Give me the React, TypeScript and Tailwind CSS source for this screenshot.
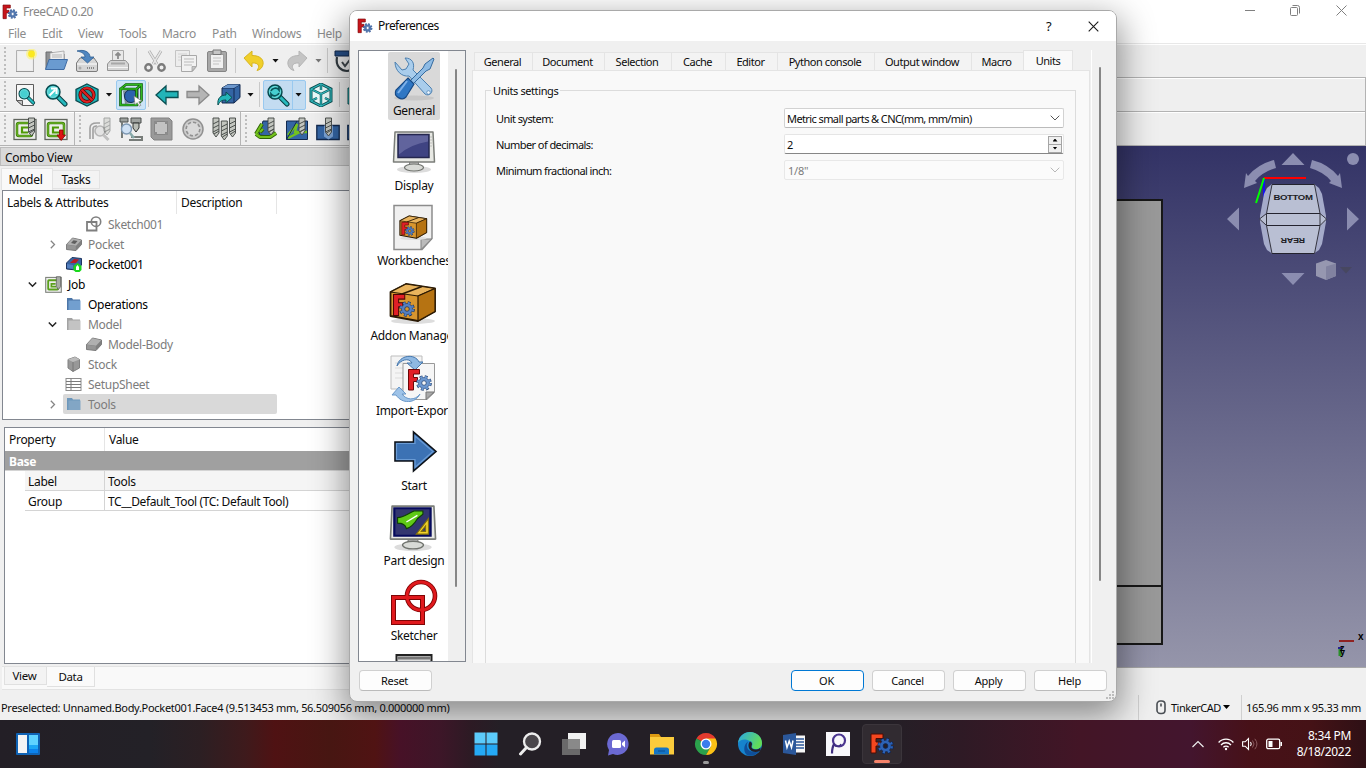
import React from "react";

type Kids = { children?: React.ReactNode };

/* ---------- shared drawing helpers ---------- */

function Svg({ s = 24, vb = 24, children }: { s?: number; vb?: number } & Kids) {
  return (
    <svg width={s} height={s} viewBox={`0 0 ${vb} ${vb}`} fill="none" className="block shrink-0">
      {children}
    </svg>
  );
}

function Gear({ x, y, r, fill = "#4a74b4", hole = "#fff", stroke = "#1c3766" }: { x: number; y: number; r: number; fill?: string; hole?: string; stroke?: string }) {
  const step = (2 * Math.PI * r) / 8;
  return (
    <g>
      <circle cx={x} cy={y} r={r} stroke={stroke} strokeWidth={r * 0.6} strokeDasharray={`${step * 0.55} ${step * 0.45}`} />
      <circle cx={x} cy={y} r={r * 0.92} fill={fill} stroke={stroke} strokeWidth={r * 0.1} />
      <circle cx={x} cy={y} r={r} stroke={fill} strokeWidth={r * 0.38} strokeDasharray={`${step * 0.45} ${step * 0.55}`} strokeDashoffset={-step * 0.05} />
      <circle cx={x} cy={y} r={r * 0.38} fill={hole} stroke={stroke} strokeWidth={r * 0.12} />
    </g>
  );
}

function FShape({ fill = "#c8151b", stroke = "#7d0b0e" }: { fill?: string; stroke?: string }) {
  return <path d="M1.5 1.5h11v4.5h-6v3.5h4v4h-4v8.5h-5z" fill={fill} stroke={stroke} strokeWidth="1" />;
}

function FreeCad({ s }: { s: number }) {
  return (
    <Svg s={s}>
      <FShape />
      <Gear x={16} y={15} r={5.5} fill="#5479b0" hole="#fff" stroke="#3a5c96" />
    </Svg>
  );
}

const Lens = ({ inner }: { inner?: React.ReactNode }) => (
  <g>
    <path d="M14 14l7 7" stroke="#063a3e" strokeWidth="5" strokeLinecap="round" />
    <path d="M14 14l7 7" stroke="#27b9bd" strokeWidth="3" strokeLinecap="round" />
    <circle cx="9" cy="9" r="7" fill="#1fb5b9" stroke="#07474b" strokeWidth="1.4" />
    <circle cx="9" cy="9" r="5.4" fill="#46cfd0" stroke="#8fe6e6" strokeWidth=".8" />
    {inner}
  </g>
);

const Drill = ({ x, y, h = 19 }: { x: number; y: number; h?: number }) => (
  <g transform={`translate(${x} ${y})`}>
    <path d={`M0 0h6v${h - 4}l-3 4l-3-4z`} fill="#c3c6c0" stroke="#3f4442" strokeWidth=".9" />
    <path d={`M0 6l6-3M0 10l6-3M0 14l6-3M1 ${h - 3}l5-3`} stroke="#4a4f4c" strokeWidth="1" />
  </g>
);

/* ---------- toolbar icons ---------- */

const I = {
  fresh: <Svg><path d="M3.5 1.5h17v21h-17z" fill="#ececec" stroke="#b0b0b0" /><path d="M5 3h14v18H5z" fill="#f1f1f1" /><path d="M3 22.500h18" stroke="#999" /><circle cx="18.5" cy="5" r="5.500" fill="#fff36b" opacity=".6" /><circle cx="18.5" cy="5" r="3.400" fill="#fbe81f" /></Svg>,
  open: <Svg><path d="M2 20V3h6l1 2h11v5" fill="#8f9193" stroke="#6a6c6e" /><path d="M6 11V4l14-2v9z" fill="#eee" stroke="#999" strokeWidth=".7" /><path d="M8 6h10M8 8h10" stroke="#b5b5b5" /><path d="M1.500 20.500l3.500-10h18.500l-3.500 10z" fill="#6a9bd0" stroke="#3e6ba4" /></Svg>,
  save: <Svg><path d="M1.500 14l3.500-5h14l3.500 5v7a1.500 1.500 0 0 1-1.500 1.500H3a1.500 1.500 0 0 1-1.500-1.500z" fill="#d6d6d6" stroke="#7c7c7c" /><path d="M2 15h20" stroke="#fff" /><path d="M12 19h8" stroke="#888" strokeWidth="2" strokeDasharray="1 1" /><circle cx="5" cy="19" r="1.500" fill="#aaa" /><path d="M2 2c7-2 13 1 13 6h4l-6.500 6L6 8h4c0-3-3-5-8-6z" fill="#4f86c0" stroke="#305f93" strokeWidth=".8" /></Svg>,
  print: <Svg><path d="M6.500 1.500h11v11h-11z" fill="#e9e9e9" stroke="#aaa" /><path d="M12 4v6M9.500 6.500L12 4l2.500 2.500" stroke="#8b8b8b" strokeWidth="1.800" /><path d="M1.500 15l3-3.500h15l3 3.500v6.500h-21z" fill="#d6d6d6" stroke="#939393" /><path d="M5 13.500h14v2H5z" fill="#888" opacity=".6" /><path d="M2 18.500h20" stroke="#f5f5f5" /></Svg>,
  cut: <Svg><path d="M6 2l8 13M18 2l-8 13" stroke="#a5a5a5" strokeWidth="2.800" /><path d="M6 2l8 13M18 2l-8 13" stroke="#e6e6e6" strokeWidth="1.500" /><circle cx="5.500" cy="18.500" r="3.200" stroke="#7b7b7b" strokeWidth="2.400" /><circle cx="18.500" cy="18.500" r="3.200" stroke="#7b7b7b" strokeWidth="2.400" /></Svg>,
  copy: <Svg><path d="M1.500 1.500h14v16h-14z" fill="#ededed" stroke="#c4c4c4" /><path d="M4 5h9M4 8h9M4 11h9" stroke="#d2d2d2" /><path d="M7.500 6.500h15v11l-4 5h-11z" fill="#f2f2f2" stroke="#a8a8a8" /><path d="M10 10h10M10 13h10M10 16h8" stroke="#bbb" /><path d="M22 17.500h-4v4.500z" fill="#c9c9c9" stroke="#999" strokeWidth=".7" /></Svg>,
  paste: <Svg><rect x="2.500" y="2.500" width="19" height="20" rx="1.500" fill="#a8a8a8" stroke="#858585" /><path d="M5.500 5.500h13v14h-13z" fill="#f0f0f0" stroke="#888" strokeWidth=".7" /><path d="M8 1h8v4.500H8z" fill="#c6c6c6" stroke="#777" /><path d="M8 9h8M8 12h8M8 15h6" stroke="#c2c2c2" /></Svg>,
  undo: <Svg><path d="M2 9l8-7v4.500c8 0 12 4 11 9-.5 3-3 5.500-6 6 3-4 2-8-5-7.500V18z" fill="#f0cf2a" stroke="#d8b520" /></Svg>,
  redo: <Svg><path d="M22 9l-8-7v4.500c-8 0-12 4-11 9 .5 3 3 5.500 6 6-3-4-2-8 5-7.500V18z" fill="#c4c4c4" stroke="#b5b5b5" /></Svg>,
  check: <Svg><path d="M3 8c-2 10 5 14 10 14s9-5 8-12" stroke="#333c42" strokeWidth="2.200" /><path d="M1 2h14v5H1z" fill="#27508a" stroke="#13294b" /><path d="M8 13l3 4 7-9" stroke="#40484d" strokeWidth="2" /></Svg>,
  fit: <Svg><path d="M3.500 1.500h17v21h-11l-6-5z" fill="#f6f6f6" stroke="#5b5b5b" /><path d="M3.500 17.500h6v5z" fill="#c4c4c4" stroke="#5b5b5b" /><g transform="translate(4.500 4) scale(.75)"><Lens /></g></Svg>,
  fitSel: <Svg><Lens inner={<path d="M5.500 12.500L11 7M7 5.500h5.500V11" stroke="#fff" strokeWidth="2" />} /></Svg>,
  style: <Svg><path d="M12 1l11 5.500v11L12 23 1 17.500v-11z" fill="#1eb4b8" stroke="#0a4a4e" strokeWidth="1.300" /><circle cx="12" cy="12" r="6.800" fill="#2b8f93" stroke="#4a0505" strokeWidth="3.600" /><circle cx="12" cy="12" r="6.800" stroke="#e02020" strokeWidth="2.200" /><path d="M7.200 7.200l9.600 9.600" stroke="#4a0505" strokeWidth="3.400" /><path d="M7 7l10 10" stroke="#e02020" strokeWidth="2.200" /></Svg>,
  bbox: <Svg><path d="M4 8l16-3v13L6 21z" fill="#7f8f9a" /><circle cx="12" cy="13" r="6.500" fill="#2b62ae" stroke="#122c55" /><path d="M1.500 6h16v16h-16zM1.500 6L7 1.500h15.500v16L17.500 22M17.500 6l5-4.500" stroke="#0a4f08" strokeWidth="2.600" /><path d="M1.500 6h16v16h-16zM1.500 6L7 1.500h15.500v16L17.500 22M17.500 6l5-4.500" stroke="#30b91f" strokeWidth="1.300" /><path d="M15 13l8 5-3.200.8 2 3.600-1.600.8-2-3.500-2.200 2z" fill="#fff" stroke="#777" strokeWidth=".7" /></Svg>,
  left: <Svg><path d="M1 12L11 3v5.500h12v6H11V21z" fill="#22b4b8" stroke="#0a4f52" strokeWidth="1.300" /></Svg>,
  right: <Svg><path d="M23 12L13 3v5.500H1v6h12V21z" fill="#b5b5b5" stroke="#8a8a8a" strokeWidth="1.300" /></Svg>,
  link: <Svg><path d="M5 5l6-3.500h12v13L17 20H5z" fill="#3465a4" stroke="#12294e" /><path d="M5 5h12v15M17 5l6-3.500" stroke="#12294e" /><path d="M5 5l6-3.500h12L17 5z" fill="#6d98cd" /><path d="M1 22c-1-7 3-10 8-10V9l6 5.500L9 20v-3c-4 0-6 1-8 5z" fill="#23b5b9" stroke="#0b4d50" /></Svg>,
  sync: <Svg><Lens inner={<path d="M5 8c1-3 6-4 8-1V4M13 10c-1 3-6 4-8 1v3" stroke="#0a5559" strokeWidth="1.700" />} /></Svg>,
  iso: <Svg><path d="M12 1l10 5v12l-10 5-10-5V6z" fill="#e9fbfb" stroke="#0a4f52" strokeWidth="3" /><path d="M2 6l10 5 10-5M12 11v12M12 2v5M3 17.500l5-2.500M21 17.500L16 15" stroke="#0a4f52" strokeWidth="2.400" /><path d="M12 1l10 5v12l-10 5-10-5V6zM2 6l10 5 10-5M12 11v12M12 2v5M3 17.500l5-2.500M21 17.500L16 15" stroke="#33bfc3" strokeWidth="1.200" /></Svg>,
  front: <Svg><path d="M2 5h14v16H2z" fill="#2ab8bc" stroke="#0a4f52" /></Svg>,
  job: <Svg><rect x="1" y="2.500" width="22" height="20" fill="#eceeea" stroke="#60655e" strokeWidth="1.300" /><rect x="4" y="6" width="15" height="13" rx="2" stroke="#3c7d0a" strokeWidth="2.500" /><rect x="4" y="6" width="15" height="13" rx="2" stroke="#78c52c" strokeWidth="1" /><path d="M15 15.500H9v-5h6" stroke="#4e9a06" strokeWidth="2.200" /><Drill x={15.500} y={1} h={18} /></Svg>,
  post: <Svg><rect x="1" y="2.500" width="22" height="20" fill="#eceeea" stroke="#60655e" strokeWidth="1.300" /><rect x="4" y="6" width="16" height="13" rx="2" stroke="#3c7d0a" strokeWidth="2.500" /><rect x="4" y="6" width="16" height="13" rx="2" stroke="#78c52c" strokeWidth="1" /><path d="M16 15.500H9v-5h6" stroke="#4e9a06" strokeWidth="2.200" /><path d="M15.500 13h3.500v5h2.500l-4.300 5.500-4.200-5.500h2.500z" fill="#dd1414" stroke="#8b0000" strokeWidth=".8" /></Svg>,
  inspect: <Svg><path d="M2 22V11c0-4 3-5 7-5h3M5 22V12c0-3 2-3 4-3" stroke="#a0a0a0" strokeWidth="1.600" /><circle cx="12" cy="14" r="5" fill="#e3e3e3" stroke="#b5b5b5" strokeWidth="1.600" /><path d="M15.500 18l5 5" stroke="#c0c0c0" strokeWidth="3" /><g opacity=".45"><Drill x={16} y={1} h={17} /></g></Svg>,
  simulate: <Svg><path d="M1 1h8v4H1zM12 1h10v5H12z" fill="#9ea29f" stroke="#4b4f4d" /><path d="M14 6h6v5l-3 4-3-4z" fill="#b9bdb6" stroke="#303432" /><path d="M3 5v16M12 20h11v3H10" stroke="#777c79" strokeWidth="2" /><circle cx="7.500" cy="12" r="5" fill="#cfe1f4" stroke="#7d98b3" strokeWidth="1.400" /><path d="M11 16l4 5" stroke="#8aa" strokeWidth="2.500" /></Svg>,
  select: <Svg><path d="M1 1h18l3 3v19H4l-3-3z" fill="#9a9a9a" stroke="#818181" /><rect x="4.500" y="4.500" width="13" height="13" fill="#c2c2c2" stroke="#858585" /><path d="M4 4h3v3H4zM15 4h3v3h-3zM4 15h3v3H4zM15 15h3v3h-3z" fill="#8b8b8b" /></Svg>,
  disk: <Svg><circle cx="12" cy="12" r="10" fill="#cdcdcd" stroke="#919191" strokeWidth="1.500" /><circle cx="12" cy="12" r="6.800" fill="#d9d9d9" stroke="#919191" strokeWidth="1.600" strokeDasharray="3.300 2" /></Svg>,
  bits: <Svg><g transform="translate(0 0)"><Drill x={1} y={1} h={19} /><Drill x={9.300} y={4} h={19} /><Drill x={17.500} y={1} h={19} /></g></Svg>,
  contour: <Svg><path d="M5 18L9 4h10v11l-4 4z" fill="#3465a4" stroke="#12294e" /><path d="M2 17l6-10M2 17l4 3h10l6-4M6 15l3-3" stroke="#2e6203" strokeWidth="4" strokeLinejoin="round" /><path d="M2 17l6-10M2 17l4 3h10l6-4M6 15l3-3" stroke="#73c21d" strokeWidth="2.200" strokeLinejoin="round" /><Drill x={14} y={1} h={17} /></Svg>,
  pocket: <Svg><path d="M1.500 4h21v18.500h-21z" fill="#3465a4" stroke="#12294e" /><path d="M3 18L12 7l-2 8h12M3 21l12-6" stroke="#73c21d" strokeWidth="2.400" /><path d="M1.500 22.500L12 4" stroke="#12294e" /><Drill x={14} y={1} h={17} /></Svg>,
  drilling: <Svg><path d="M.8 8.500h22.400v14H.8z" fill="#3465a4" stroke="#12294e" strokeWidth="1.300" /><path d="M8 8.500h9v11l-4.500 3-4.500-3z" fill="#7ba2d3" /><Drill x={9.500} y={1} h={18} /></Svg>,
};

/* ---------- toolbar pieces ---------- */

const Btn = ({ children }: Kids) => <div className="flex h-[30px] w-[31px] shrink-0 items-center justify-center">{children}</div>;
const Sep = () => <div className="flex h-[25px] w-[6px] shrink-0 justify-center"><div className="w-px bg-[#c9c9c9]" /></div>;
const Drop = ({ c = "bg-[#111]", w = "w-[12px]" }: { c?: string; w?: string }) => (
  <div className={`flex shrink-0 justify-center ${w}`}>
    <div className={`h-[4px] w-[7px] ${c} [clip-path:polygon(0_0,100%_0,50%_100%)]`} />
  </div>
);
const Handle = () => (
  <div className="flex h-[27px] w-[9.5px] shrink-0 flex-col items-start justify-between pl-[4px]">
    {Array.from({ length: 7 }, (_, i) => <i key={i} className="block h-[2px] w-[2px] bg-[#bdbdbd]" />)}
  </div>
);
const Edge = () => <div className="h-[33px] w-px shrink-0 bg-[#b5b5b5]" />;
const Bar = ({ children, right = true }: Kids & { right?: boolean }) => (
  <div className={`flex h-[34px] items-center overflow-hidden border-b border-b-[#b3b3b3] bg-[#efefef] shadow-[inset_0_1px_0_#fff] ${right ? "border-r border-r-[#b3b3b3]" : ""}`}>{children}</div>
);

/* ---------- tree ---------- */

const Folder = ({ c, d }: { c: string; d: string }) => (
  <Svg s={16} vb={16}><path d="M1 14V2h5l1 1.500h7V14z" fill={d} /><path d="M2.500 4.500h12V14h-12z" fill={c} /></Svg>
);
const Slab = ({ hole }: { hole?: boolean }) => (
  <Svg s={16} vb={16}>
    <path d="M.5 8.500L6.500 2l9 2v4.500L10 14.500l-9.500-1z" fill="#808080" stroke="#7a7a7a" strokeLinejoin="round" />
    <path d="M.8 8.500L6.500 2.300l8.700 1.900L10 9.800z" fill="#b0b0b0" />
    <path d="M.8 8.800l9 1.200v4l-9-1z" fill="#959595" />
    {hole && <path d="M5 7l2.500-2.800 4 .8L9 8z" fill="#5e5e5e" />}
  </Svg>
);
const treeIcons: Record<string, React.ReactNode> = {
  sketch: <Svg s={16} vb={16}><path d="M1 6h9.500v8.500H1z" stroke="#7f7f7f" strokeWidth="1.800" /><circle cx="10" cy="5.700" r="4.700" stroke="#7f7f7f" strokeWidth="1.600" /></Svg>,
  pocket: <Slab hole />,
  pocketNew: <Svg s={16} vb={16}><path d="M.5 7L6 1.500l9.500 1V9l-5 5-10-1z" fill="#3a64a0" stroke="#1c3460" /><path d="M4 7l4-4 5 .5L10 7z" fill="#b51c24" /><path d="M1 8l6 1v4L1 12z" fill="#527fbf" /><path d="M11.500 7l4 3v4l-2 2h-4l-2-2v-4z" fill="#19d81b" /><path d="M11.500 9l1.500 2v3h-3v-3z" fill="#fff" /></Svg>,
  job: <Svg s={17} vb={24}><rect x="1" y="2" width="22" height="21" fill="#efefef" stroke="#7c807a" strokeWidth="1.500" /><rect x="4.500" y="6" width="14" height="13" rx="1" stroke="#5ba01d" strokeWidth="2.600" /><path d="M16 15H9v-4h6" stroke="#5ba01d" strokeWidth="2.400" /><path d="M16 1h6v14l-3 4-3-4z" fill="#a8aca5" stroke="#555" /></Svg>,
  ops: <Folder c="#729fcf" d="#4c76a8" />,
  model: <Folder c="#c3c3c3" d="#a3a3a3" />,
  body: <Slab />,
  stock: <Svg s={16} vb={16}><path d="M2 3.500L9 1l4.500 2.500V12L7 15.500 2 12z" fill="#989898" stroke="#808080" /><path d="M2 3.500L7 6l6.500-2.500L9 1z" fill="#bbb" /><path d="M7 6v9.500" stroke="#777" /></Svg>,
  sheet: <Svg s={17} vb={17}><rect x="1" y="2.500" width="15" height="12" fill="#fff" stroke="#8c8c8c" /><path d="M1 5.500h15M1 8.500h15M1 11.500h15M6 2.500v12" stroke="#7b7b7b" /></Svg>,
  tools: <Folder c="#82a6c5" d="#6d97bb" />,
};

const Chevron = ({ open }: { open?: boolean }) => (
  <Svg s={9} vb={9}>{open ? <path d="M.8 2.500L4.500 6.200l3.700-3.700" stroke="#222" strokeWidth="1.500" /> : <path d="M2.800.800L6.500 4.500 2.800 8.200" stroke="#858585" strokeWidth="1.300" />}</Svg>
);

type Row = { pad: string; mark?: "open" | "closed"; icon: string; text: string; dark?: boolean; sel?: boolean };
const rows: Row[] = [
  { pad: "pl-[65px]", icon: "sketch", text: "Sketch001" },
  { pad: "pl-[45px]", mark: "closed", icon: "pocket", text: "Pocket" },
  { pad: "pl-[45px]", icon: "pocketNew", text: "Pocket001", dark: true },
  { pad: "pl-[25px]", mark: "open", icon: "job", text: "Job", dark: true },
  { pad: "pl-[45px]", icon: "ops", text: "Operations", dark: true },
  { pad: "pl-[45px]", mark: "open", icon: "model", text: "Model" },
  { pad: "pl-[65px]", icon: "body", text: "Model-Body" },
  { pad: "pl-[45px]", icon: "stock", text: "Stock" },
  { pad: "pl-[45px]", icon: "sheet", text: "SetupSheet" },
  { pad: "pl-[45px]", mark: "closed", icon: "tools", text: "Tools", sel: true },
];

function TreeRow({ r }: { r: Row }) {
  return (
    <div className={`flex h-[20px] items-center ${r.pad}`}>
      <div className="flex w-[15px] shrink-0 items-center">{r.mark && <Chevron open={r.mark === "open"} />}</div>
      <div className={`flex h-[20px] items-center pl-[2px] ${r.sel ? "w-[214px] rounded-[2px] bg-[#d9d9d9]" : ""}`}>
        <div className="flex w-[17px] justify-center">{treeIcons[r.icon]}</div>
        <span className={`pl-[6px] pt-[2px] ${r.dark ? "text-black" : "text-[#7c7c7c]"}`}>{r.text}</span>
      </div>
    </div>
  );
}

function ComboView() {
  return (
    <div className="flex h-[545px] w-[352px] shrink-0 flex-col bg-[#f0f0f0]">
      <div className="mt-px flex h-[19px] items-center border-y border-l border-[#bcbcbc] bg-[#d9d9d9] pl-[4px] pt-[2px]">Combo View</div>
      <div className="flex h-[24px] items-end pl-px pt-[2px]">
        <div className="flex h-[22px] w-[52px] items-center justify-center border border-b-0 border-[#e3e3e3] bg-[#f9f9f9] pr-[3px]">Model</div>
        <div className="mb-[1px] flex h-[19px] w-[47px] items-center justify-center border border-l-0 border-[#e3e3e3] bg-[#f3f3f3] pt-px">Tasks</div>
      </div>
      <div className="ml-[2px] h-[230px] border border-[#828790] bg-white">
        <div className="flex h-[23px]">
          <div className="flex w-[174px] items-center border-r border-[#e5e5e5] pl-[4px] pt-px">Labels &amp; Attributes</div>
          <div className="flex w-[100px] items-center border-r border-[#e5e5e5] pl-[4px] pt-px">Description</div>
        </div>
        {rows.map((r) => <TreeRow key={r.text} r={r} />)}
      </div>
      <div className="ml-[4px] mt-[7px] h-[237px] border border-[#828790] bg-white">
        <div className="flex h-[23px]">
          <div className="flex w-[100px] items-center border-r border-[#e5e5e5] pl-[4px] pt-px">Property</div>
          <div className="flex items-center pl-[4px] pt-px">Value</div>
        </div>
        <div className="flex h-[20px] items-center border-b border-[#d4d4d4] bg-[#a0a0a0] pl-[4px] pt-[2px] font-bold text-white">Base</div>
        <div className="ml-[20px] flex h-[20px] border-b border-[#d4d4d4] bg-[#f5f5f5]">
          <div className="flex w-[80px] items-center border-r border-[#d4d4d4] pl-[3px] pt-[2px]">Label</div>
          <div className="flex items-center pl-[3px] pt-[2px]">Tools</div>
        </div>
        <div className="ml-[20px] flex h-[20px] border-b border-[#d4d4d4]">
          <div className="flex w-[80px] items-center border-r border-[#d4d4d4] pl-[3px] pt-[2px]">Group</div>
          <div className="flex items-center whitespace-nowrap pl-[3px] pt-[2px] tracking-[-0.37px]">TC__Default_Tool (TC: Default Tool)</div>
        </div>
      </div>
      <div className="ml-[2px] mt-[2px] flex h-[24px] items-start border-b border-t border-[#e3e3e3] bg-[#f9f9f9] pl-[2px]">
        <div className="flex h-[18px] w-[43px] items-center justify-center border border-t-0 border-[#e0e0e0] bg-[#f3f3f3] pr-[2px] pt-px text-[11.5px]">View</div>
        <div className="flex h-[20px] w-[48px] items-center justify-center border-b border-r border-[#e0e0e0] bg-[#fafafa] pt-px text-[11.5px]">Data</div>
      </div>
    </div>
  );
}

/* ---------- 3D view ---------- */

function Scene() {
  return (
    <svg width="1014" height="521" viewBox="352 146 1014 521" className="block">
      <defs>
        <linearGradient id="sky" x1="0" y1="0" x2="0" y2="1"><stop offset="0" stopColor="#333366" /><stop offset="1" stopColor="#9595aa" /></linearGradient>
      </defs>
      <rect x="352" y="146" width="1014" height="521" fill="url(#sky)" />
      <path d="M600 200H1162V644H600M600 586H1162" fill="#999999" stroke="#171717" strokeWidth="2" />
      <g fill="#8b8db0">
        <path d="M1293 153l11.500 12h-23zM1293 285l11.500-12h-23zM1227 219l12-11.500v23zM1359 219l-12-11.500v23z" />
        <path d="M1274 160l2 8q-14 4-21 13l2 2-13 5 2-15 2 3q10-12 26-16zM1312 160l-2 8q14 4 21 13l-2 2 13 5-2-15-2 3q-10-12-26-16z" />
        <circle cx="1353" cy="159" r="6" />
      </g>
      <path d="M1264 179v16l5 14" stroke="#1414f0" strokeWidth="2" fill="none" />
      <path d="M1272 184h42l5 4 3 6 4 22v6l-4 22-3 6-5 3.500h-42l-5-3.500-3-6-4-22v-6l4-22 3-6z" fill="#a5abca" />
      <path d="M1272 184.500h42.500l5.500 29 6.500 5.500-6.500 7-5.500 27.500H1272l-5.500-27.500-7-7 7-5.500z" fill="#b9bfd3" />
      <path d="M1272 184.500h42.500M1272 253.500h42.500M1266.500 213.500h53.500M1266.500 225.500h53.500" stroke="#23232e" strokeWidth="1.100" />
      <path d="M1272 184.500l-5.500 29v12l5.500 28M1314.500 184.500l5.500 29v12l-5.500 28M1266.500 213.500l-7 5.500 7 6.500M1320 213.500l6.500 5.500-6.500 6.500" stroke="#34343f" strokeWidth="1" fill="none" />
      <text x="1293" y="200" textAnchor="middle" fontFamily="Liberation Sans" fontWeight="700" fontSize="7.500" fill="#1c1c24" textLength="39" lengthAdjust="spacingAndGlyphs">BOTTOM</text>
      <text transform="translate(1293 237.500) rotate(180)" textAnchor="middle" fontFamily="Liberation Sans" fontWeight="700" fontSize="8" fill="#1c1c24" textLength="24" lengthAdjust="spacingAndGlyphs">REAR</text>
      <path d="M1264 178h42" stroke="#f00" strokeWidth="2" />
      <path d="M1264 178l-8 25" stroke="#0f0" strokeWidth="2" />
      <path d="M1316 263.500l10-3.500 10 3.500v12.500l-10 4-10-4z" fill="#9697b0" />
      <path d="M1326 266.500l10-3v12.500l-10 4z" fill="#8182a0" />
      <path d="M1340 267h12l-6 6.500z" fill="#474760" />
      <path d="M1339 641h15" stroke="#8f2222" strokeWidth="2" />
      <path d="M1340 649v7" stroke="#2a8f2a" strokeWidth="3" />
      <path d="M1338 648h4" stroke="#23238f" strokeWidth="2" />
      <g fontFamily="Liberation Sans" fontWeight="700" fontSize="10" fill="#000"><text x="1358" y="640">x</text><text x="1340" y="651" fontSize="9">z</text><text x="1340" y="655" fontSize="9">y</text></g>
    </svg>
  );
}

/* ---------- preference categories ---------- */

const Screen = ({ children }: Kids) => (
  <g>
    <ellipse cx="24" cy="43" rx="17" ry="3.500" fill="#dcdcdc" />
    <path d="M20 34h8l1 7h-10z" fill="#bbb" stroke="#777" />
    <ellipse cx="24" cy="41" rx="9.500" ry="3.500" fill="#d8dad6" stroke="#70736e" strokeWidth="1.200" />
    <path d="M5 5.500h38l1.500 30h-41z" fill="#e8e9e4" stroke="#7b7e79" strokeWidth="1.500" strokeLinejoin="round" />
    {children}
  </g>
);
const Crate = () => (
  <g>
    <ellipse cx="24" cy="42" rx="22" ry="3" fill="#ddd" />
    <path d="M1.500 13L17 5l29 4.500v23L29 42 1.500 37z" fill="#d8962f" stroke="#2b1a04" strokeWidth="1.800" strokeLinejoin="round" />
    <path d="M1.500 13L29 17l17-7.500L17 5z" fill="#e9b45d" stroke="#2b1a04" strokeWidth="1.200" strokeLinejoin="round" />
    <path d="M29 17v25l17-9.500v-23z" fill="#b67312" stroke="#2b1a04" strokeWidth="1.200" strokeLinejoin="round" />
    <path d="M13 15L33 7.500" stroke="#2b1a04" strokeWidth="1.500" />
    <g transform="translate(3 14) scale(1.020)"><FShape fill="#e21f26" stroke="#4d0505" /></g>
    <Gear x={18} y={30} r={6} fill="#5580c2" hole="#d8962f" stroke="#132b57" />
  </g>
);

const cats: { name: string; icon: React.ReactNode; sel?: boolean }[] = [
  { name: "General", sel: true, icon: <Svg s={48} vb={48}><ellipse cx="24" cy="44" rx="20" ry="2.500" fill="#bbb" opacity=".6" /><path d="M5 8l7 8 4-1 3-5-4-6c7 0 10 5 8 12l18 18c3 4-2 9-6 6L19 22C12 23 5 17 5 8z" fill="#a9cdec" stroke="#4c80b0" /><circle cx="38.500" cy="38.500" r="1.800" fill="#eef6fd" stroke="#4c80b0" strokeWidth=".7" /><path d="M35 10l8-6 1 1-4 10-4 2-14 14-3-3 14-14z" fill="#8ebbe4" stroke="#356b9f" /><path d="M18 24l6 6-8 13c-4 4-13 0-10-7z" fill="#2f77c4" stroke="#174a85" strokeWidth="1.200" /><path d="M17 27l-9 12" stroke="#7db0e8" strokeWidth="2" /></Svg> },
  { name: "Display", icon: <Svg s={48} vb={48}><g transform="translate(0 -2.500)"><Screen><path d="M8 8h31v23H8z" fill="#3f4382" stroke="#25274f" strokeWidth="1.500" /><path d="M9 9h29v6Q20 18 9 28z" fill="#7072a8" opacity=".7" /><path d="M41 10v12" stroke="#999" strokeDasharray="1 2" /></Screen></g></Svg> },
  { name: "Workbenches", icon: <Svg s={48} vb={48}><path d="M5 1.500h38v33L33 45.500H5z" fill="#f0f0f0" stroke="#8c8c8c" strokeWidth="1.500" /><path d="M42.500 35H32v10.500z" fill="#bcbcbc" stroke="#828282" /><g transform="translate(10 9) scale(.6)"><Crate /></g></Svg> },
  { name: "Addon Manager", icon: <Svg s={48} vb={48}><Crate /></Svg> },
  { name: "Import-Export", icon: <Svg s={48} vb={48}><path d="M2 2h31v33H2z" fill="#f4f4f4" stroke="#bdbdbd" /><path d="M6 9h12M6 14h10M6 19h10M6 24h10" stroke="#dcdcdc" /><path d="M14 9.500h31.500v29l-7.500 7H14z" fill="#f6f6f6" stroke="#999" /><path d="M45 38h-8v7.500z" fill="#aaa" stroke="#777" /><path d="M8 12C10 1 26-1 30 8h4l-8 8-8-7h5c-3-6-12-3-15 3z" fill="#8fb8e2" stroke="#4577ad" /><path d="M31 40c-5 7-14 6-18 0h4l-7-7-7 8h4c6 9 19 9 24-1z" fill="#9ec3e8" stroke="#6a98c9" /><g transform="translate(18 14)"><FShape fill="#e21f26" stroke="#6b0707" /></g><Gear x={35} y={29} r={6} fill="#6d98d0" hole="#f6f6f6" stroke="#1d3d70" /></Svg> },
  { name: "Start", icon: <Svg s={48} vb={48}><path d="M5 13h18.500V3L46 22.500 23.500 42V32H5z" fill="#3c72b4" stroke="#0d1117" strokeWidth="1.600" /><path d="M6.500 14.500H25V7l18 15.500-18 15.800V30.500H6.500z" stroke="#6a9bd4" strokeWidth="1.200" /></Svg> },
  { name: "Part design", icon: <Svg s={48} vb={48}><g transform="translate(-2.400 -4) scale(1.100)"><Screen><path d="M7 7.500h33v25H7z" fill="#33366f" stroke="#060a5c" strokeWidth="2" /><path d="M10 16c5 0 10-4 15-6h8v3l-5 4c-3 5-6 8-10 9-1-4-4-5-8-5z" fill="#5fc916" stroke="#0d3f02" /><path d="M18 20l10-6" stroke="#fff" strokeWidth="1.200" /><path d="M38 17v14H27zM35.500 23.500v5h-4z" fill="#f3d32b" stroke="#83700c" fillRule="evenodd" /></Screen></g></Svg> },
  { name: "Sketcher", icon: <Svg s={48} vb={48}><path d="M3.500 18.500h29v25h-29z" stroke="#7f0505" strokeWidth="5" /><circle cx="31" cy="17" r="14" stroke="#7f0505" strokeWidth="4.600" /><path d="M3.500 18.500h29v25h-29z" stroke="#e0191d" strokeWidth="3" /><circle cx="31" cy="17" r="14" stroke="#e0191d" strokeWidth="2.800" /></Svg> },
  { name: "", icon: <Svg s={48} vb={48}><path d="M6.500 1h35v20h-35z" fill="#ddd" stroke="#222" strokeWidth="2" /><path d="M8 4h32" stroke="#777" strokeWidth="3" /></Svg> },
];

function CategoryList() {
  return (
    <div className="flex h-[612px] w-[108px] shrink-0 overflow-hidden border border-[#828790] bg-[#efefef]">
      <div className="flex h-[610px] w-[89px] shrink-0 flex-col items-start overflow-hidden bg-white pl-[6px] pt-px">
        {cats.map((c, i) => (
          <div key={i} className="flex h-[75px] w-[98px] shrink-0 justify-center">
            <div className={`flex h-[68px] flex-col items-center ${c.sel ? "w-[52px] rounded-[2px] bg-[#d9d9d9]" : "w-fit"}`}>
              <div className="h-[51px] shrink-0 pr-px pt-[2px]">{c.icon}</div>
              <span className="whitespace-nowrap leading-[15px]">{c.name}</span>
            </div>
          </div>
        ))}
      </div>
      <div className="ml-[7px] mt-[18px] h-[518px] w-[2px] rounded bg-[#868686]" />
    </div>
  );
}

/* ---------- dialog ---------- */

const tabs: [string, string][] = [
  ["General", "w-[58px]"], ["Document", "w-[72px]"], ["Selection", "w-[67px]"], ["Cache", "w-[54px]"], ["Editor", "w-[52px]"],
  ["Python console", "w-[97px]"], ["Output window", "w-[97px]"], ["Macro", "w-[52px]"],
];

const Push = ({ children, main }: Kids & { main?: boolean }) => (
  <div className={`flex h-[21px] w-[73px] shrink-0 items-center justify-center rounded-[4px] border bg-[#fdfdfd] pr-[2px] pt-px text-[11px] ${main ? "border-[#0078d4]" : "border-[#d0d0d0] border-b-[#bbb]"}`}>{children}</div>
);
const Down = ({ c }: { c: string }) => <svg width="10" height="6" viewBox="0 0 10 6" fill="none"><path d="M.7.700L5 5l4.300-4.300" stroke={c} /></svg>;

const Field = ({ label, children }: Kids & { label: string }) => (
  <div className="flex h-[20px] items-center">
    <div className="w-[288px] pt-[2px]">{label}</div>
    {children}
  </div>
);

function Dialog() {
  return (
    <div className="absolute left-[349px] top-[10px] z-10 flex h-[692px] w-[768px] flex-col overflow-hidden rounded-[8px] border border-[#a9a9a9] bg-[#f0f0f0]">
      <div className="flex h-[30px] shrink-0 items-center bg-white pl-[7px]">
        <FreeCad s={16} />
        <span className="flex-1 pl-[5px] tracking-[-0.55px]">Preferences</span>
        <span className="w-[42px] text-[13px]">?</span>
        <Svg s={11} vb={11}><path d="M.7.700l9.600 9.600M10.300.700L.7 10.300" stroke="#1a1a1a" strokeWidth="1.100" /></Svg>
        <div className="w-[17px]" />
      </div>
      <div className="flex h-[622px] shrink-0 pl-[8px] pt-[9px]">
        <CategoryList />
        <div className="ml-[6px] flex h-[613px] w-[618px] flex-col overflow-hidden text-[11px] tracking-[-0.57px]">
          <div className="flex h-[20px] shrink-0 items-end pl-[2px] tracking-[-0.45px]">
            {tabs.map(([t, w]) => (
              <div key={t} className={`flex h-[18px] items-center justify-center whitespace-nowrap border-l border-t border-[#e4e4e4] bg-[#f3f3f3] pr-[2px] pt-px ${w}`}>{t}</div>
            ))}
            <div className="flex h-[20px] w-[50px] items-center justify-center border-x border-t border-[#e4e4e4] bg-[#f9f9f9] pt-px">Units</div>
            <div className="flex-1" />
          </div>
          <div className="flex-1 border-x border-t border-[#e4e4e4] bg-[#f9f9f9] px-[12px] pt-[11px]">
            <fieldset className="h-[620px] w-[591px] border border-[#dcdcdc] px-[10px]">
              <legend className="-ml-[5px] h-[16px] px-[2px] leading-[17px] tracking-[-0.4px]">Units settings</legend>
              <div className="flex flex-col gap-[6px] pt-[10px]">
                <Field label="Unit system:">
                  <div className="flex h-[20px] w-[280px] shrink-0 items-center justify-between rounded-[2px] border border-[#d2d2d2] border-b-[#bbb] bg-white pl-[2px] pr-[3px]">
                    <span className="pt-[2px] tracking-[-0.6px]">Metric small parts &amp; CNC(mm, mm/min)</span><Down c="#555" />
                  </div>
                </Field>
                <Field label="Number of decimals:">
                  <div className="flex h-[20px] w-[280px] shrink-0 items-center justify-between rounded-[2px] border border-[#e5e5e5] border-b-[#868686] bg-white pl-[2px] pr-px">
                    <span className="pt-[2px]">2</span>
                    <div className="flex h-[17px] w-[14px] flex-col border border-[#a5a5a5] bg-[#f0f0f0]">
                      <div className="flex h-[8px] items-center justify-center border-b border-[#a5a5a5]"><i className="h-[3px] w-[5px] bg-black [clip-path:polygon(50%_0,100%_100%,0_100%)]" /></div>
                      <div className="flex flex-1 items-center justify-center"><i className="h-[3px] w-[5px] bg-black [clip-path:polygon(0_0,100%_0,50%_100%)]" /></div>
                    </div>
                  </div>
                </Field>
                <Field label="Minimum fractional inch:">
                  <div className="flex h-[20px] w-[280px] shrink-0 items-center justify-between rounded-[2px] border border-[#e8e8e8] bg-[#fbfbfb] pl-[3px] pr-[3px] text-[#7c7c7c]">
                    <span className="pt-[2px] tracking-[-0.2px]">1/8"</span><Down c="#b8b8b8" />
                  </div>
                </Field>
              </div>
            </fieldset>
          </div>
        </div>
        <div className="ml-px w-px bg-white" />
        <div className="ml-[7px] mt-[17px] h-[514px] w-[2px] rounded bg-[#868686]" />
      </div>
      <div className="flex gap-[8px] pl-[9px] pt-[7px]">
        <Push>Reset</Push>
        <div className="w-[343px]" />
        <Push main>OK</Push>
        <Push>Cancel</Push>
        <Push>Apply</Push>
        <Push>Help</Push>
      </div>
      <svg width="8" height="8" viewBox="0 0 8 8" className="absolute bottom-[2px] right-[2px]"><path d="M6 0h2v2H6zM3 3h2v2H3zM6 3h2v2H6zM0 6h2v2H0zM3 6h2v2H3zM6 6h2v2H6z" fill="#bdbdbd" /></svg>
    </div>
  );
}

/* ---------- taskbar ---------- */

const Task = ({ children, on, dot }: Kids & { on?: boolean; dot?: boolean }) => (
  <div className="flex w-[44px] shrink-0 justify-center">
    <div className={`relative flex h-[40px] w-[40px] items-center justify-center rounded-[4px] ${on ? "border border-[#3b353b] bg-[#312b31]" : ""}`}>
      {children}
      {on && <div className="absolute bottom-0 h-[3px] w-[16px] rounded bg-[#f5836b]" />}
      {dot && <div className="absolute bottom-0 h-[3px] w-[6px] rounded bg-[#9a9a9a]" />}
    </div>
  </div>
);

function Taskbar() {
  return (
    <div className="relative z-20 flex h-[48px] items-center bg-[linear-gradient(90deg,#231f26_0px,#232127_150px,#2c1f23_200px,#3e1a1c_245px,#4f1213_275px,#471612_330px,#501313_375px,#471127_400px,#3d1628_440px,#2d1a24_470px,#241f26_500px,#241f26_890px,#2e1a25_960px,#431526_1080px,#43152e_1190px,#471118_1250px,#451216_1310px,#2e1015_1366px)]">
      <div className="w-[464px] shrink-0 pl-[16px]">
        <Svg s={24}><rect width="24" height="22" y="1" rx="1" fill="#0f63b5" /><path d="M2 3h9v18H2z" fill="#f4f4f4" /><path d="M13 3h9v10h-9z" fill="#5fd3ff" /><path d="M13 13h9v4h-9z" fill="#1ca7f5" /><path d="M13 17h9v4h-9z" fill="#0b82ec" /></Svg>
      </div>
      <Task><Svg><path d="M.5.500h11v11H.5zM12.500.500h11v11h-11z" fill="#5ccbfb" /><path d="M.5 12.500h11v11H.5zM12.500 12.500h11v11h-11z" fill="#25a9f5" /></Svg></Task>
      <Task><Svg><circle cx="14" cy="9.500" r="8" fill="#4a464b" stroke="#ededed" strokeWidth="2.300" /><path d="M8.500 15.500l-6 6.500" stroke="#ededed" strokeWidth="3" strokeLinecap="round" /></Svg></Task>
      <Task><Svg><path d="M6 1h18v16H6z" fill="#f2f2f2" /><path d="M0 7h18v16H0z" fill="#777" opacity=".85" /></Svg></Task>
      <Task><Svg><path d="M12 1a11 11 0 1 1-5 21L2 23.500 3 18A11 11 0 0 1 12 1z" fill="#6b69d2" /><rect x="6" y="8" width="9" height="8" rx="1.500" fill="#fff" /><path d="M16 11l3-2.500v7L16 13z" fill="#fff" /></Svg></Task>
      <Task><Svg><path d="M0 2h9l2 3v4H0z" fill="#dd9a12" /><path d="M0 5h24v17.500H0z" fill="#fbcb3c" /><path d="M4 22.500V18a2.500 2.500 0 0 1 2.500-2.500h10A2.500 2.500 0 0 1 19 18v4.500z" fill="#1474c4" /><path d="M8 19h7" stroke="#0a4a8a" /></Svg></Task>
      <Task dot><Svg><path d="M12 12L2.470 6.500A11 11 0 0 1 21.530 6.500z" fill="#e33b2e" /><path d="M2.470 6.500A11 11 0 0 0 12 23l5-8.500-5-2.500z" fill="#2ba24c" /><path d="M21.530 6.500A11 11 0 0 1 12 23l4.800-8.500L12 6.500z" fill="#fbc116" /><circle cx="12" cy="12" r="5.500" fill="#fff" /><circle cx="12" cy="12" r="4.200" fill="#3b7ded" /></Svg></Task>
      <Task><Svg><defs><linearGradient id="edgeTop" x1="0" y1="0" x2="1" y2=".4"><stop offset="0" stopColor="#2aa8e8" /><stop offset="1" stopColor="#62dc58" /></linearGradient></defs><circle cx="12" cy="12" r="12" fill="#1684cd" /><path d="M0 11C1 4 6 0 12 0c7 0 12 5 12 11 0 4-3 6-6 6-3.500 0-4.500-1.500-4-3 1-2 .5-5-2.500-5C6 6 2 8 0 11z" fill="url(#edgeTop)" /><path d="M9 12c-1 6 4 9 10 7l3-1c-3 5-8 6.500-12 5.500C5 21 5 13 10 9.500z" fill="#0f4f9a" /><path d="M13.500 14c-.500 2 1 3.500 4.500 3.500 2 0 3.500-1 4.500-2v3c-5 3-12 1-12-5 0-2 .5-3 1.500-4 2 .5 2.500 2.500 1.500 4.500z" fill="#241f26" /></Svg></Task>
      <Task><Svg><path d="M12 3.500h11v17H12z" fill="#f6f6f6" /><path d="M14 7h8M14 10h8M14 13h8M14 16h8" stroke="#2b579a" strokeWidth="1.300" /><path d="M1 3l13-2v22L1 21z" fill="#2b579a" /><path d="M3.500 8.500l1.500 7 2.200-6.500 2.300 6.500 1.500-7" stroke="#fff" strokeWidth="1.500" /></Svg></Task>
      <Task><Svg><path d="M0 0h24v24H0z" fill="#f8f8fb" /><circle cx="13" cy="8.500" r="6" stroke="#4a3590" strokeWidth="2.200" /><path d="M8.500 11.500C6 15 6 18 6 21.500" stroke="#3f2e80" strokeWidth="2.200" /><path d="M8 13c2 2 6 2 7-1" stroke="#3f2e80" strokeWidth="1.300" /></Svg></Task>
      <Task on><Svg><path d="M1 2h12v4.500H6v3.500h5v4H6v7H1z" fill="#f4471f" stroke="#4d0c05" /><Gear x={15.500} y={14} r={6.300} fill="#2d62b5" hole="#241f26" stroke="#0d2454" /></Svg></Task>
      <div className="w-[288px] shrink-0" />
      <Svg s={12} vb={12}><path d="M.5 9L6 3.500 11.500 9" stroke="#eee" strokeWidth="1.200" /></Svg>
      <div className="w-[14px]" />
      <svg width="16" height="16" viewBox="0 0 16 16" fill="none" stroke="#fff" strokeWidth="1.300"><path d="M.6 6.500c4-4.500 10.800-4.500 14.800 0M3 9c2.700-3 7.300-3 10 0M5.400 11.300c1.400-1.500 3.800-1.500 5.200 0" /><circle cx="8" cy="13" r="1.200" fill="#fff" stroke="none" /></svg>
      <div className="w-[8px]" />
      <svg width="16" height="14" viewBox="0 0 16 14" fill="none" stroke="#fff"><path d="M.6 4.800h2.600L6.500 1.500v11L3.200 9.200H.6z" strokeWidth="1.100" /><path d="M8.500 5q1.500 2 0 4" strokeWidth="1.100" /><path d="M10.500 3.500q3 3.500 0 7M12.800 1.800q4.300 5.200 0 10.400" stroke="#8a5a5e" /></svg>
      <div className="w-[8px]" />
      <svg width="17" height="12" viewBox="0 0 17 12" fill="none"><rect x=".7" y="1.200" width="13" height="9.500" rx="1.500" stroke="#fff" strokeWidth="1.300" /><path d="M2.500 3h4v6h-4zM14.500 4h1.500v4h-1.500z" fill="#fff" /></svg>
      <div className="ml-auto mr-[15px] text-right leading-[16px] text-white"><div>8:34 PM</div><div>8/18/2022</div></div>
    </div>
  );
}

/* ---------- window ---------- */

export default function App() {
  return (
    <div className="relative flex h-[768px] w-[1366px] flex-col overflow-hidden bg-[#f0f0f0] font-['Noto_Sans','Open_Sans',sans-serif] text-[12px] leading-[16px] tracking-[-0.3px] text-[#0c0c0c]">
      <div className="flex h-[24px] shrink-0 items-center bg-white pl-[2px] text-[#888]">
        <FreeCad s={16} />
        <span className="flex-1 pl-[5px] tracking-[-0.45px]">FreeCAD 0.20</span>
        <svg width="105" height="18" viewBox="0 0 105 18" fill="none" stroke="#808080"><path d="M0 7.500h10M91.500 2.500l10 10M101.500 2.500l-10 10" /><rect x="45.500" y="4.500" width="7" height="8" rx="1" /><path d="M47.500 2.500h5a2 2 0 0 1 2 2v6" /></svg>
        <div className="w-[16px]" />
      </div>
      <div className="flex h-[20px] shrink-0 items-center gap-[16px] border-b border-[#e8e8e8] bg-white pl-[8px] text-[#8c8c8c]">
        <span className="w-[18px]">File</span><span className="w-[20px]">Edit</span><span className="w-[25px]">View</span><span className="w-[27px]">Tools</span><span className="w-[34px]">Macro</span><span className="w-[24px]">Path</span><span className="w-[49px]">Windows</span><span>Help</span>
      </div>
      <Bar right={false}>
        <Handle /><Btn>{I.fresh}</Btn><Btn>{I.open}</Btn><Btn>{I.save}</Btn><Btn>{I.print}</Btn><Sep /><Btn>{I.cut}</Btn><Btn>{I.copy}</Btn><Btn>{I.paste}</Btn><Sep />
        <Btn>{I.undo}</Btn><Drop /><Btn>{I.redo}</Btn><Drop c="bg-[#777]" /><Sep /><Btn>{I.check}</Btn>
      </Bar>
      <Bar>
        <Handle /><Btn>{I.fit}</Btn><Btn>{I.fitSel}</Btn><Btn>{I.style}</Btn><Drop w="w-[13px]" />
        <div className="flex h-[30px] w-[30px] shrink-0 items-center justify-center rounded-[2px] border border-[#99c9ef] bg-[#cce4f7]">{I.bbox}</div><Sep />
        <Btn>{I.left}</Btn><Btn>{I.right}</Btn><Btn>{I.link}</Btn><Drop /><Sep />
        <div className="flex h-[30px] w-[43px] shrink-0 items-center rounded-[2px] border border-[#99c9ef] bg-[#c3dcf1]"><div className="flex h-full w-[30px] items-center justify-center border-r border-[#99c9ef]">{I.sync}</div><Drop /></div>
        <Btn>{I.iso}</Btn><Sep /><Btn>{I.front}</Btn>
      </Bar>
      <Bar>
        <Handle /><Btn>{I.job}</Btn><Btn>{I.post}</Btn><div className="w-[2px]" /><Edge /><Handle />
        <Btn>{I.inspect}</Btn><Btn>{I.simulate}</Btn><Btn>{I.select}</Btn><Btn>{I.disk}</Btn><Btn>{I.bits}</Btn><div className="w-px" /><Edge /><Handle />
        <Btn>{I.contour}</Btn><Btn>{I.pocket}</Btn><Btn>{I.drilling}</Btn><Btn>{I.drilling}</Btn>
      </Bar>
      <div className="flex h-[545px] shrink-0">
        <ComboView />
        <div className="h-[522px] border-b border-[#a8a8a8]"><Scene /></div>
      </div>
      <div className="flex h-[29px] shrink-0 items-center whitespace-nowrap pt-[3px] text-[11px] tracking-[-0.3px]">
        <div className="flex-1 pl-px pt-px">Preselected: Unnamed.Body.Pocket001.Face4 (9.513453 mm, 56.509056 mm, 0.000000 mm)</div>
        <div className="h-[25px] w-px shrink-0 bg-[#d0d0d0]" />
        <div className="flex w-[102px] shrink-0 items-center pl-[17px]">
          <svg width="10" height="15" viewBox="0 0 10 15" fill="none" stroke="#4a4f54" strokeWidth="1.600" className="shrink-0"><rect x="1" y="1" width="8" height="12.500" rx="3.300" /><path d="M5 3.500v3" /></svg>
          <span className="flex-1 pl-[5px] pt-px tracking-[-0.5px]">TinkerCAD</span>
          <div className="mr-[11px] h-[4px] w-[7px] shrink-0 bg-black [clip-path:polygon(0_0,100%_0,50%_100%)]" />
        </div>
        <div className="h-[25px] w-px shrink-0 bg-[#d0d0d0]" />
        <div className="w-[124px] shrink-0 pl-[4px] pt-px">165.96 mm x 95.33 mm</div>
      </div>
      <Taskbar />
      <div className="pointer-events-none absolute left-[349px] top-[10px] h-[691px] w-[768px] rounded-[8px] shadow-[0_12px_34px_4px_rgba(0,0,0,0.42)]" />
      <Dialog />
    </div>
  );
}
